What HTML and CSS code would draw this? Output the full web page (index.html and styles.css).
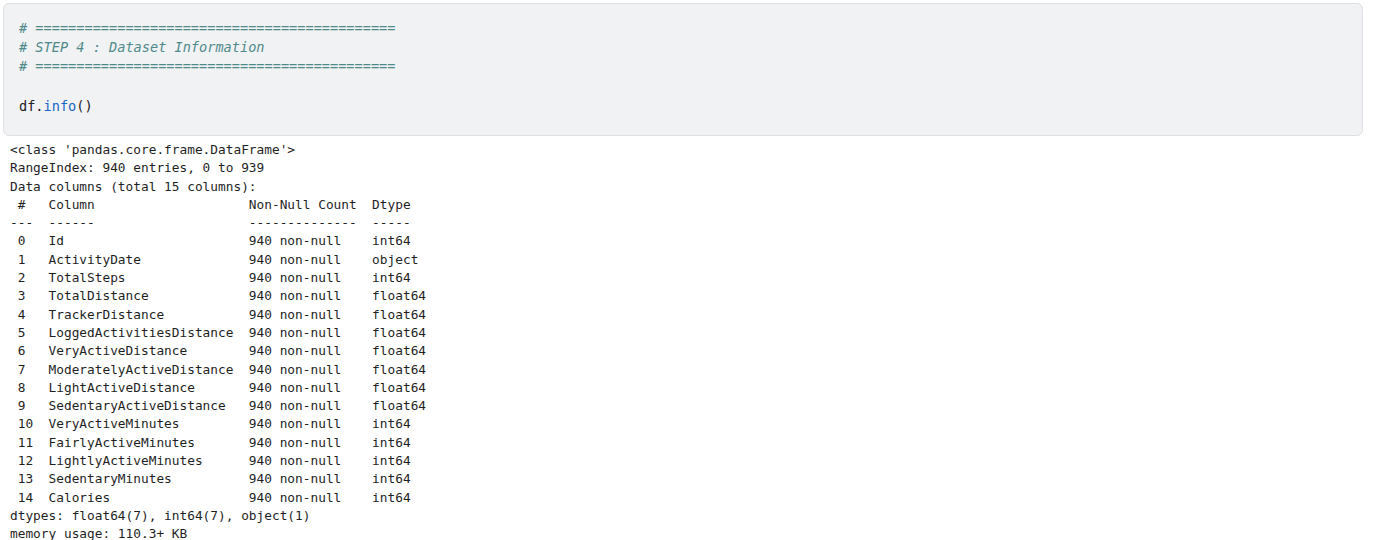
FILE: index.html
```html
<!DOCTYPE html>
<html>
<head>
<meta charset="utf-8">
<link rel="stylesheet" href="styles.css">
</head>
<body>
<div class="cell">
<pre class="code"><span class="cm"># ============================================</span>
<span class="cm"># STEP 4 : Dataset Information</span>
<span class="cm"># ============================================</span></pre>
<pre class="code call">df.<span class="fn">info</span>()</pre>
</div>
<pre class="output">&lt;class 'pandas.core.frame.DataFrame'&gt;
RangeIndex: 940 entries, 0 to 939
Data columns (total 15 columns):
 #   Column                    Non-Null Count  Dtype  
---  ------                    --------------  -----  
 0   Id                        940 non-null    int64  
 1   ActivityDate              940 non-null    object 
 2   TotalSteps                940 non-null    int64  
 3   TotalDistance             940 non-null    float64
 4   TrackerDistance           940 non-null    float64
 5   LoggedActivitiesDistance  940 non-null    float64
 6   VeryActiveDistance        940 non-null    float64
 7   ModeratelyActiveDistance  940 non-null    float64
 8   LightActiveDistance       940 non-null    float64
 9   SedentaryActiveDistance   940 non-null    float64
 10  VeryActiveMinutes         940 non-null    int64  
 11  FairlyActiveMinutes       940 non-null    int64  
 12  LightlyActiveMinutes      940 non-null    int64  
 13  SedentaryMinutes          940 non-null    int64  
 14  Calories                  940 non-null    int64  
dtypes: float64(7), int64(7), object(1)
memory usage: 110.3+ KB</pre>
</body>
</html>
```
FILE: styles.css
```css
html, body {
  margin: 0;
  padding: 0;
  background: #ffffff;
}
.cell {
  margin: 3px 14px 0 3px;
  background: #f1f2f4;
  border: 1px solid #dfe0e3;
  border-radius: 6px;
  padding: 15px 15px 19px 15px;
}
.code {
  margin: 0;
  font-family: "DejaVu Sans Mono", "Liberation Mono", monospace;
  font-size: 13.6px;
  line-height: 19px;
  color: #202124;
}
.call {
  margin-top: 21px;
}
.cm {
  color: #4f8a8b;
  font-style: italic;
}
.fn {
  color: #1a66c6;
}
.output {
  margin: 5px 0 0 0;
  padding-left: 10px;
  font-family: "DejaVu Sans Mono", "Liberation Mono", monospace;
  font-size: 12.8px;
  line-height: 18.3px;
  color: #1f1f1f;
}
```
